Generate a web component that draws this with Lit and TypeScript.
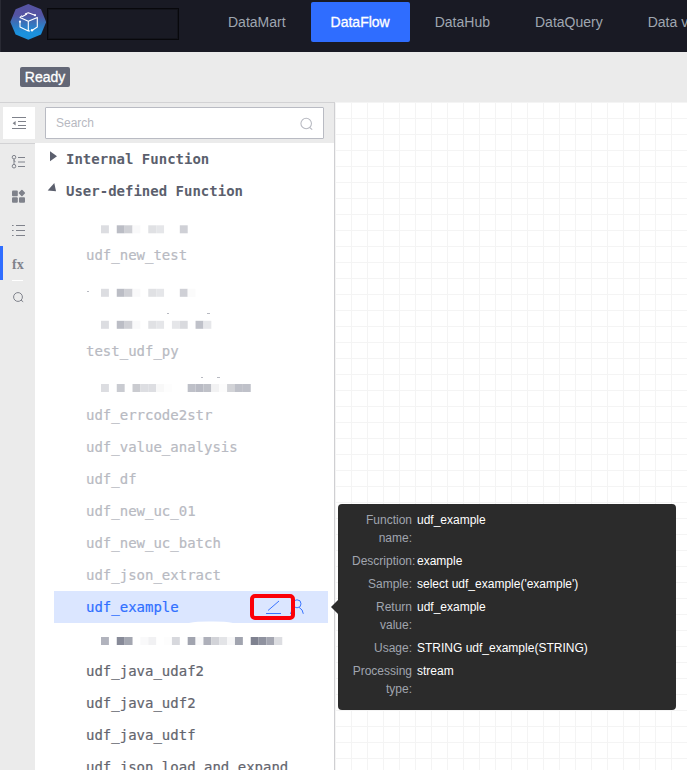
import { LitElement, html, svg, css } from "lit";
import { customElement } from "lit/decorators.js";
import { classMap } from "lit/directives/class-map.js";

type Cell = [x: number, color: string];
interface Row {
  name?: string;
  cells?: Cell[];
  top?: number;
  tone?: "muted" | "dark" | "active";
  specks?: [number, number, number][];
  smudge?: boolean;
}

const rows: Row[] = [
  { top: 18.3, cells: [[0, "#dcdde1"], [2, "#bbbdc5"], [3, "#cfd0d5"], [4, "#f9f9fa"], [6, "#e0e1e4"], [7, "#e5e6e9"], [10, "#cfd0d6"]] },
  { name: "udf_new_test", tone: "muted" },
  { top: 17.8, specks: [[87, 20, 2]], cells: [[0, "#dcdde1"], [2, "#bbbdc5"], [3, "#cfd0d5"], [4, "#f9f9fa"], [6, "#e0e1e4"], [7, "#e5e6e9"], [10, "#cfd0d6"], [11, "#fbfbfb"]] },
  { top: 17.8, specks: [[167, 10, 2], [207, 10, 3]], cells: [[0, "#dcdde1"], [2, "#bbbdc5"], [3, "#cfd0d5"], [4, "#f9f9fa"], [6, "#e0e1e4"], [7, "#e5e6e9"], [9, "#e5e6e9"], [10, "#d9dade"], [12, "#bfc1c9"], [13, "#e6e7ea"]] },
  { name: "test_udf_py", tone: "muted" },
  { top: 17, specks: [[201, 10, 2], [217, 10, 3]], cells: [[0, "#dcdde1"], [2, "#c9cbd1"], [4, "#cacbd0"], [5, "#dddee2"], [6, "#dddee2"], [7, "#f8f8f8"], [8, "#fdfdfd"], [11, "#bec0c8"], [12, "#b9bbc4"], [13, "#bfc1c8"], [14, "#f2f2f3"], [15, "#fcfcfc"], [16, "#d2d3d7"], [17, "#bfc1c9"], [18, "#bfc1c9"]] },
  { name: "udf_errcode2str", tone: "muted" },
  { name: "udf_value_analysis", tone: "muted" },
  { name: "udf_df", tone: "muted" },
  { name: "udf_new_uc_01", tone: "muted" },
  { name: "udf_new_uc_batch", tone: "muted" },
  { name: "udf_json_extract", tone: "muted" },
  { name: "udf_example", tone: "active" },
  { top: 14, smudge: true, cells: [[0, "#b1b3bd"], [2, "#878a98"], [3, "#a4a7b1"], [5, "#f9f9fa"], [6, "#f1f1f3"], [8, "#fdfdfd"], [9, "#d7d8dd"], [11, "#a1a4af"], [12, "#f9f9fa"], [13, "#aeb0ba"], [14, "#d2d3d8"], [15, "#e3e4e7"], [16, "#f7f7f8"], [17, "#a1a4af"], [19, "#7f8290"], [20, "#8f929f"], [21, "#a4a6b1"], [22, "#dcdde1"]] },
  { name: "udf_java_udaf2", tone: "dark" },
  { name: "udf_java_udf2", tone: "dark" },
  { name: "udf_java_udtf", tone: "dark" },
  { name: "udf_json_load_and_expand", tone: "dark" },
];

const details: [string, string][] = [
  ["Function name:", "udf_example"],
  ["Description:", "example"],
  ["Sample:", "select udf_example('example')"],
  ["Return value:", "udf_example"],
  ["Usage:", "STRING udf_example(STRING)"],
  ["Processing type:", "stream"],
];

const icons = {
  collapse: svg`<path d="M2 3.5H16M8 7.5H16M8 11.5H16M2 14.5H16"/><path d="M2.6 9.2L5.6 7V11.4Z" fill="currentColor" stroke="none"/>`,
  tree: svg`<circle cx="4" cy="4.2" r="1.8"/><circle cx="4" cy="13.2" r="1.8"/><path d="M4 6V11.4M4 7.2Q4 8.7 5.5 8.7M8 4.5H15M8 9H15M8 13.5H15"/>`,
  blocks: svg`<g fill="currentColor" stroke="none"><rect x="2" y="3.6" width="5.8" height="5.6" rx="1"/><rect x="2" y="10.2" width="5.8" height="5.6" rx="1"/><rect x="9" y="10.2" width="6" height="5.6" rx="1"/><rect x="9.4" y="3.5" width="5" height="5" rx=".8" transform="rotate(45 11.9 6)"/></g>`,
  list: svg`<path d="M2 4.5H3.6M2 9.5H3.6M2 14.5H3.6M6 4.5H15M6 9.5H15M6 14.5H15"/>`,
  search: svg`<circle cx="8" cy="9" r="4.4"/><path d="M11 12.2L13.2 13.8"/>`,
};

const icon = (shape: unknown) => html`<svg class="icon" viewBox="0 0 18 18">${shape}</svg>`;

@customElement("app-root")
export class AppRoot extends LitElement {
  static styles = css`
    :host {
      display: flex;
      flex-direction: column;
      width: 687px;
      height: 770px;
      overflow: hidden;
      background: #fff;
      font: 14px/20px "Liberation Sans", Arial, sans-serif;
      color: #63656e;
      box-sizing: border-box;
    }
    * { box-sizing: border-box; }
    .header {
      flex: none;
      display: flex;
      height: 52px;
      background: #191a24;
      border-left: 1px solid #292a34;
      overflow: hidden;
    }
    .logo { flex: none; width: 36px; height: 36px; margin: 4px 0 0 9px; }
    .project {
      flex: none;
      width: 132px;
      height: 32px;
      margin: 8px 0 0 1px;
      border: 1px solid #08080c;
      box-shadow: inset 0 0 0 1px #13141b;
    }
    .nav { display: flex; gap: 5px; margin: 2px 0 0 29px; }
    .nav-item {
      height: 40px;
      padding: 0 20px;
      border-radius: 2px;
      line-height: 40px;
      white-space: nowrap;
      color: #9fa6b0;
    }
    .nav-item.on { background: #2f6dff; color: #fff; -webkit-text-stroke: .3px #fff; }
    .toolbar {
      flex: none;
      height: 50px;
      padding: 15px 20px;
      background: #ebebeb;
    }
    .status {
      display: inline-block;
      width: 50px;
      height: 20px;
      border-radius: 2px;
      background: #636776;
      color: #fff;
      text-align: center;
      -webkit-text-stroke: .3px #fff;
    }
    .main { flex: 1; display: flex; min-height: 0; }
    .rail {
      flex: none;
      width: 35px;
      background: #ebebeb;
      border-top: 1px solid #d2d2d4;
      color: #7f828b;
    }
    .rail-head { height: 41px; padding: 4px 0 0 3px; border-bottom: 1px solid #d2d2d4; }
    .rail-toggle { display: flex; width: 32px; height: 32px; background: #fff; padding: 7px 0 0 7px; }
    .rail-list { display: flex; flex-direction: column; padding-top: 1px; }
    .rail-item {
      display: flex;
      align-items: center;
      height: 34px;
      padding: 0 0 1px 10px;
      border: 0;
    }
    .rail-item.on {
      padding: 3px 0 0 9px;
      margin-top: -1px;
      border-left: 3px solid #2f6dff;
      font: bold 14px/34px "Liberation Serif", serif;
    }
    .divider { width: 11px; height: 1px; margin: 0 0 -1px 12px; background: #fff; }
    .icon { width: 18px; height: 18px; fill: none; stroke: currentColor; stroke-width: 1; }
    .panel {
      flex: none;
      display: flex;
      flex-direction: column;
      width: 300px;
      border-top: 1px solid #d2d2d4;
      border-right: 1px solid #cfcfd2;
    }
    .search { flex: none; height: 40px; padding: 4px 10px; background: #ebebeb; }
    .field {
      display: flex;
      align-items: center;
      justify-content: space-between;
      width: 279px;
      height: 32px;
      padding: 0 7px 0 10px;
      border: 1px solid #b9bbc3;
      border-radius: 1px;
      background: #fff;
      font-size: 12px;
      color: #b7b9c1;
    }
    .field .icon { width: 19px; height: 19px; }
    .functions {
      flex: 1;
      min-height: 0;
      overflow: hidden;
      font: 14px/32px "DejaVu Sans Mono", monospace;
    }
    .group { display: flex; height: 32px; font-weight: bold; color: #5b5f6d; }
    .arrow { flex: none; width: 31px; height: 32px; fill: currentColor; }
    .row { height: 32px; margin: 0 6px 0 19px; padding-left: 32px; white-space: nowrap; -webkit-text-stroke: .2px currentColor; }
    .row.muted { color: #b8bac2; }
    .row.dark { color: #63656e; }
    .row.active { display: flex; justify-content: space-between; color: #3070ff; background: #dbe6ff; }
    .mosaic { display: block; width: 299px; height: 32px; overflow: visible; }
    .actions { display: flex; height: 32px; padding: 3px 24px 0 0; }
    .edit {
      width: 45px;
      height: 26px;
      border: 4px solid #fb0007;
      border-radius: 5px;
      z-index: 1;
      display: flex;
    }
    .edit svg { width: 37px; height: 18px; fill: none; stroke: #3974ff; }
    .user { width: 17px; height: 20px; margin: 2px 0 0 -8px; fill: none; stroke: #3974ff; }
    .canvas {
      position: relative;
      flex: 1;
      background-color: #fff;
      background-image: linear-gradient(#f4f4f4 1px, transparent 1px), linear-gradient(90deg, #f4f4f4 1px, transparent 1px);
      background-size: 16px 16px;
    }
    .tooltip {
      position: absolute;
      left: 3px;
      top: 402px;
      width: 338px;
      height: 206px;
      padding: 7px 14px;
      border-radius: 4px;
      background: rgba(33, 33, 33, .955);
      font-size: 12px;
      line-height: 18px;
    }
    .tooltip::before {
      content: "";
      position: absolute;
      left: -7px;
      top: 96px;
      border: 7px solid transparent;
      border-left: 0;
      border-right-color: #2b2b2b;
    }
    .detail { display: flex; margin-bottom: 5px; }
    .key { flex: none; width: 60px; margin-right: 5px; text-align: right; color: #a0a5af; }
    .value { color: #fff; white-space: nowrap; }
  `;

  renderMosaic(row: Row) {
    return html`<svg class="mosaic" viewBox="35 0 299 32">
      ${row.cells!.map(([x, color]) => svg`<rect x=${101 + x * 7.88} y=${row.top!} width="7.9" height="8" fill=${color} />`)}
      ${(row.specks ?? []).map(([x, y, w]) => svg`<rect x=${x} y=${y} width=${w} height="1" fill="#b8bac2" />`)}
      ${row.smudge ? svg`<path d="M189 0Q198 -1.6 211 -1.4Q224 -1.6 233 0Z" fill="#fff" />` : null}
    </svg>`;
  }

  renderRow(row: Row) {
    if (row.cells) return this.renderMosaic(row);
    const tone = row.tone!;
    return html`<div class="row ${tone}">
      <span>${row.name}</span>
      ${tone === "active"
        ? html`<div class="actions">
            <div class="edit"><svg viewBox="0 0 37 18"><path d="M12 15.5H27M14 12.5L25 3" /></svg></div>
            <svg class="user" viewBox="0 0 17 20"><circle cx="10" cy="7.8" r="4" /><path d="M3.5 18Q4 13.5 8 11.6M12 11.3Q16 13.5 16.3 17.8" /></svg>
          </div>`
        : null}
    </div>`;
  }

  renderGroup(label: string, open: boolean) {
    return html`<div class="group">
      <svg class="arrow" viewBox="0 0 31 32">
        ${open ? svg`<path d="M12.7 15.5L19.3 8L21 16.3Z" />` : svg`<path d="M15 8.3L22 13.3L15 18.3Z" />`}
      </svg>
      <span>${label}</span>
    </div>`;
  }

  render() {
    const nav = ["DataMart", "DataFlow", "DataHub", "DataQuery", "Data view"];
    return html`
      <div class="header">
        <svg class="logo" viewBox="10 4 36 36">
          <defs>
            <linearGradient id="fill" x1="0" y1="0" x2="0" y2="1">
              <stop offset=".3" stop-color="#5553a2" />
              <stop offset=".52" stop-color="#3a70b8" />
              <stop offset=".8" stop-color="#1b91dc" />
            </linearGradient>
          </defs>
          <path fill="url(#fill)" d="M28.3 4L41 9.3L46.2 22L41 34.5L28.3 39.8L15.6 34.5L10.3 22L15.6 9.3Z" />
          <path fill="none" stroke="#fff" stroke-width="1.1" stroke-linejoin="round" d="M25 14L28.3 12.7L34.3 15M22 15.6L20 17.4L28.3 21.2L37.3 17.4V27L33 29.7M28.3 21.2V31L20 27V22M22 16.7L27 14M30 31L28.3 31" />
          <g fill="#fff"><circle cx="20" cy="21.7" r="1.1" /><circle cx="35" cy="15.2" r="1.1" /><circle cx="32" cy="30.3" r="1.2" /></g>
        </svg>
        <div class="project"></div>
        <div class="nav">
          ${nav.map((n) => html`<div class=${classMap({ "nav-item": true, on: n === "DataFlow" })}>${n}</div>`)}
        </div>
      </div>
      <div class="toolbar"><span class="status">Ready</span></div>
      <div class="main">
        <div class="rail">
          <div class="rail-head"><div class="rail-toggle">${icon(icons.collapse)}</div></div>
          <div class="rail-list">
            <div class="rail-item">${icon(icons.tree)}</div>
            <div class="rail-item">${icon(icons.blocks)}</div>
            <div class="rail-item">${icon(icons.list)}</div>
            <div class="rail-item on">fx</div>
            <div class="divider"></div>
            <div class="rail-item">${icon(icons.search)}</div>
          </div>
        </div>
        <div class="panel">
          <div class="search"><div class="field"><span>Search</span>${icon(svg`<circle cx="8.7" cy="9" r="5" /><path d="M12 12.8L14.4 14.8" />`)}</div></div>
          <div class="functions">
            ${this.renderGroup("Internal Function", false)}
            ${this.renderGroup("User-defined Function", true)}
            ${rows.map((r) => this.renderRow(r))}
          </div>
        </div>
        <div class="canvas">
          <div class="tooltip">
            ${details.map(([k, v]) => html`<div class="detail"><div class="key">${k}</div><div class="value">${v}</div></div>`)}
          </div>
        </div>
      </div>
    `;
  }
}
